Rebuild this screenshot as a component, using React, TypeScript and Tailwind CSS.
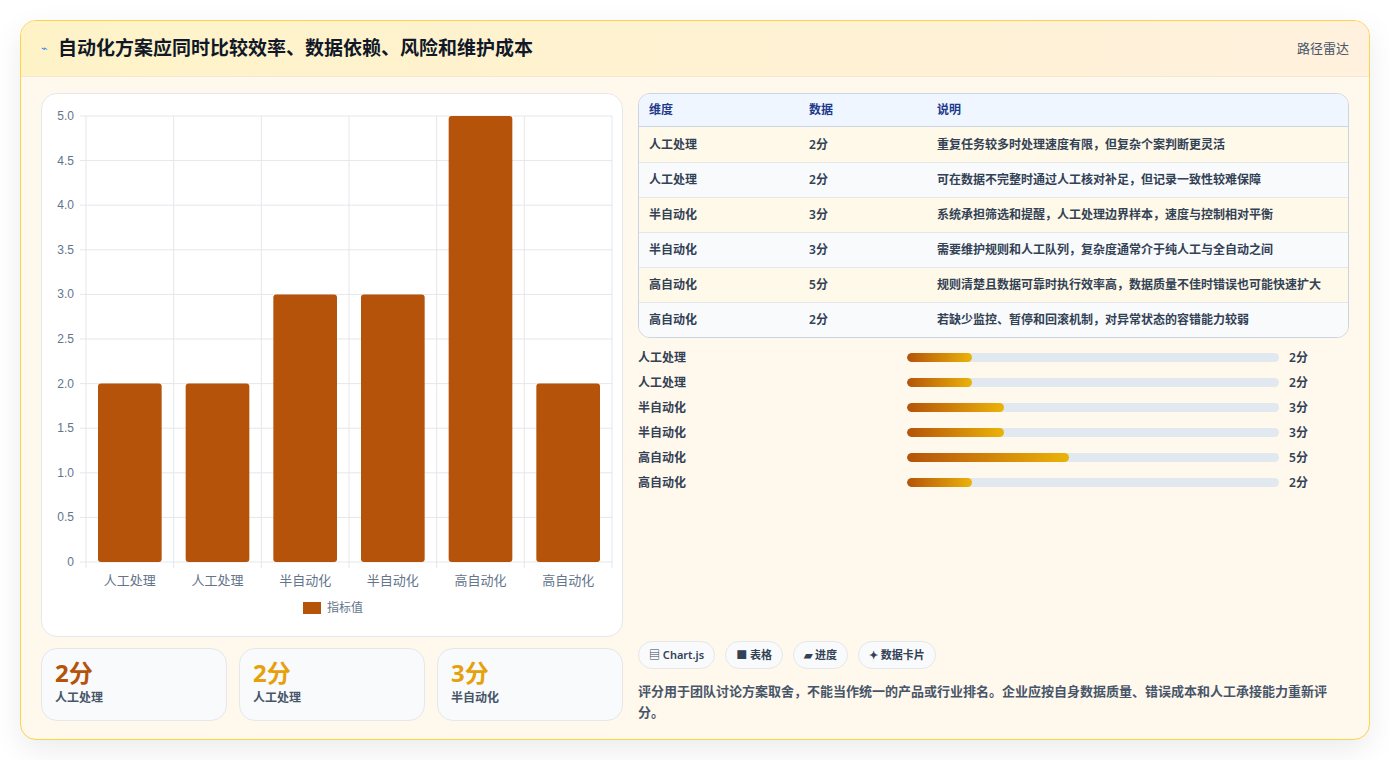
import React from "react";

const rows = [
  { k: "人工处理", v: 2, d: "重复任务较多时处理速度有限，但复杂个案判断更灵活" },
  { k: "人工处理", v: 2, d: "可在数据不完整时通过人工核对补足，但记录一致性较难保障" },
  { k: "半自动化", v: 3, d: "系统承担筛选和提醒，人工处理边界样本，速度与控制相对平衡" },
  { k: "半自动化", v: 3, d: "需要维护规则和人工队列，复杂度通常介于纯人工与全自动之间" },
  { k: "高自动化", v: 5, d: "规则清楚且数据可靠时执行效率高，数据质量不佳时错误也可能快速扩大" },
  { k: "高自动化", v: 2, d: "若缺少监控、暂停和回滚机制，对异常状态的容错能力较弱" },
];

const Chart = () => {
  const x0 = 44, x1 = 570, yTop = 22, yBot = 468;
  const unit = (yBot - yTop) / 5;
  const cw = (x1 - x0) / 6;
  const ticks = [0, 0.5, 1, 1.5, 2, 2.5, 3, 3.5, 4, 4.5, 5];
  return (
    <svg width="582" height="543" className="block" style={{ fontFamily: "'Liberation Sans','Noto Sans CJK SC',sans-serif" }}>
      {ticks.map((t) => {
        const y = yBot - t * unit;
        return (
          <g key={t}>
            <line x1={x0 - 6} x2={x1} y1={y} y2={y} stroke="#e5e7eb" />
            <text x={x0 - 12} y={y + 4} textAnchor="end" fontSize="12" fill="#64748b">
              {t === 0 ? "0" : t.toFixed(1)}
            </text>
          </g>
        );
      })}
      {Array.from({ length: 7 }).map((_, i) => (
        <line key={i} x1={x0 + i * cw} x2={x0 + i * cw} y1={yTop} y2={yBot + 6} stroke="#e5e7eb" />
      ))}
      {rows.map((r, i) => {
        const h = r.v * unit;
        const bx = x0 + i * cw + 12;
        return (
          <g key={i}>
            <rect x={bx} y={yBot - h} width={cw - 24} height={h} rx="3" fill="#b45309" />
            <text x={x0 + i * cw + cw / 2} y={yBot + 23} textAnchor="middle" fontSize="13" fill="#64748b">
              {r.k}
            </text>
          </g>
        );
      })}
      <rect x="261" y="508" width="18" height="12" fill="#b45309" />
      <text x="285" y="518" fontSize="12" fill="#64748b">指标值</text>
    </svg>
  );
};

export default function App() {
  return (
    <div className="min-h-screen bg-white p-5" style={{ fontFamily: "'Noto Sans','Noto Sans CJK SC',sans-serif" }}>
      <div className="h-[720px] rounded-2xl border border-[#fcd34d] bg-[#fff8ec] shadow-[0_10px_30px_rgba(0,0,0,0.08)] overflow-hidden flex flex-col">
        <div className="h-[56px] bg-gradient-to-r from-[#fef3c7] to-[#fff1dd] border-b border-[#f3e8d0] flex items-center justify-between px-5">
          <div className="flex items-center gap-2.5">
            <span className="text-[11px] text-[#3b82f6]">⌁</span>
            <h1 className="text-[19px] font-bold text-[#111827]">自动化方案应同时比较效率、数据依赖、风险和维护成本</h1>
          </div>
          <span className="text-[13px] text-[#475569]">路径雷达</span>
        </div>
        <div className="flex-1 flex gap-[15px] px-5 pt-4 pb-4">
          <div className="w-[582px] flex flex-col gap-[11px]">
            <div className="h-[544px] rounded-2xl bg-white border border-[#e5e7eb]">
              <Chart />
            </div>
            <div className="grid grid-cols-3 gap-[12px]">
              {[
                { v: "2分", k: "人工处理", c: "text-[#b45309]" },
                { v: "2分", k: "人工处理", c: "text-[#e6a10a]" },
                { v: "3分", k: "半自动化", c: "text-[#e6a10a]" },
              ].map((s, i) => (
                <div key={i} className="h-[73px] rounded-2xl bg-[#f8fafc] border border-[#e5e7eb] px-[13px] pt-2">
                  <div className={`text-[24px] font-bold leading-8 ${s.c}`}>{s.v}</div>
                  <div className="text-[12px] text-[#475569] font-semibold">{s.k}</div>
                </div>
              ))}
            </div>
          </div>
          <div className="flex-1 flex flex-col">
            <div className="rounded-xl border border-[#cbd5e1] overflow-hidden text-[12px] font-semibold">
              <div className="h-[33px] bg-[#eff6ff] border-b border-[#cbd5e1] flex items-center text-[#1e3a8a]">
                <div className="w-[170px] pl-[10px]">维度</div>
                <div className="w-[128px]">数据</div>
                <div>说明</div>
              </div>
              {rows.map((r, i) => (
                <div key={i} className={`h-[35px] flex items-center text-[#334155] ${i > 0 ? "border-t border-[#e5e7eb]" : ""} ${i % 2 === 0 ? "bg-[#fef9e8]" : "bg-[#f8fafc]"}`}>
                  <div className="w-[170px] pl-[10px]">{r.k}</div>
                  <div className="w-[128px]">{r.v}分</div>
                  <div>{r.d}</div>
                </div>
              ))}
            </div>
            <div className="mt-[7px] flex flex-col">
              {rows.map((r, i) => (
                <div key={i} className="h-[25px] flex items-center text-[12px] font-semibold text-[#334155]">
                  <div className="w-[269px]">{r.k}</div>
                  <div className="w-[372px] h-[9px] rounded-full bg-[#e2e8f0] overflow-hidden">
                    <div className="h-full rounded-full bg-gradient-to-r from-[#b45309] to-[#eab308]" style={{ width: `${(r.v / 11.5) * 100}%` }} />
                  </div>
                  <div className="ml-[10px]">{r.v}分</div>
                </div>
              ))}
            </div>
            <div className="flex-1" />
            <div className="flex gap-[10px] text-[11px] font-semibold text-[#334155]">
              {["▤ Chart.js", "■ 表格", "▰ 进度", "✦ 数据卡片"].map((t) => (
                <span key={t} className="h-[28px] px-[10px] rounded-full bg-[#f8fafc] border border-[#e5e7eb] flex items-center">{t}</span>
              ))}
            </div>
            <p className="mt-[12px] text-[13px] leading-[21px] text-[#475569] font-semibold pr-4">
              评分用于团队讨论方案取舍，不能当作统一的产品或行业排名。企业应按自身数据质量、错误成本和人工承接能力重新评分。
            </p>
          </div>
        </div>
      </div>
    </div>
  );
}
